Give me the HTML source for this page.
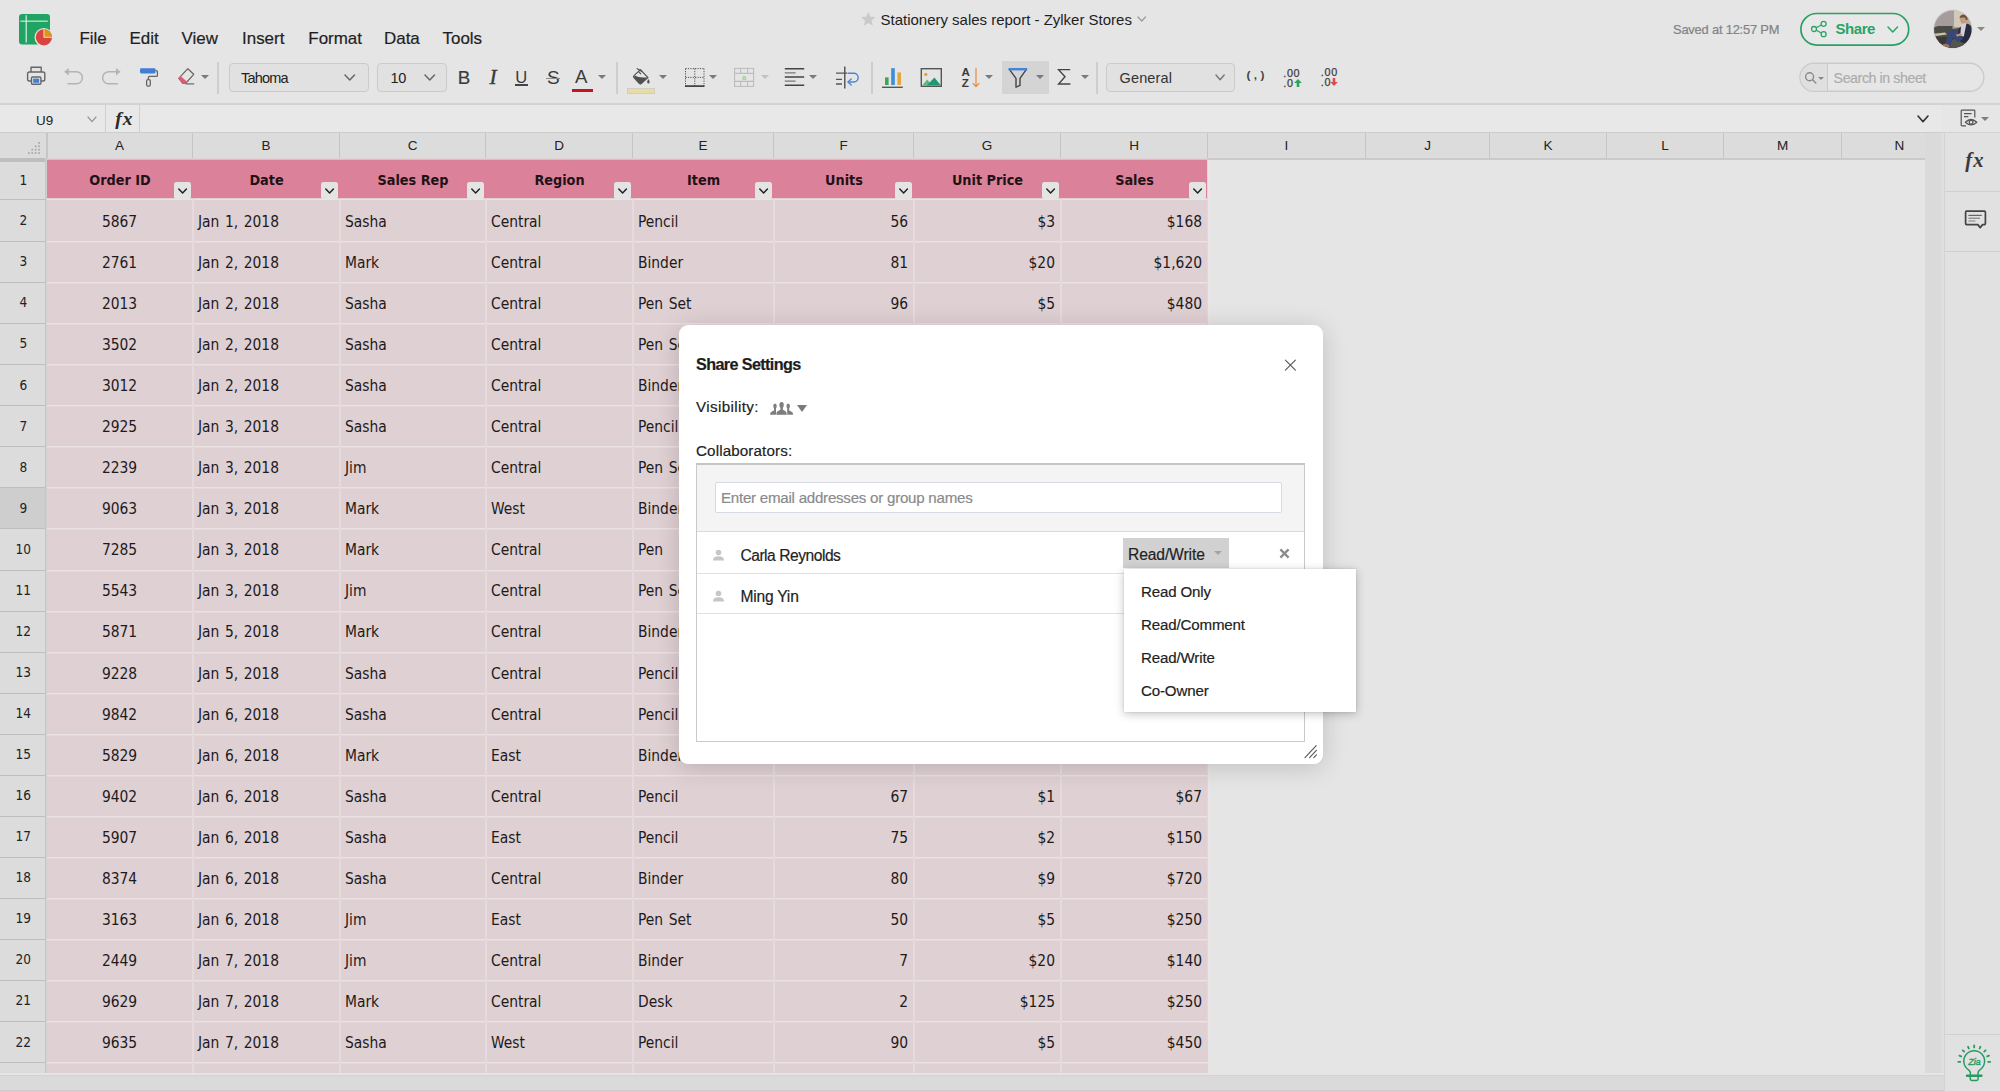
<!DOCTYPE html>
<html lang="en"><head><meta charset="utf-8"><title>Stationery sales report - Zylker Stores</title>
<style>

html,body{margin:0;padding:0}
body{width:2000px;height:1091px;position:relative;overflow:hidden;background:#e5e5e5;font-family:"Liberation Sans", sans-serif;color:#222;}
.abs{position:absolute}
.abs svg{display:block}
#top{position:absolute;left:0;top:0;width:2000px;height:103px;background:#e5e5e5;border-bottom:2px solid #d3d3d3}
.menu{position:absolute;top:28px;font-size:16.95px;line-height:22px;color:#1f1f1f;white-space:nowrap;-webkit-text-stroke:0.2px #1f1f1f}
.tsep{position:absolute;top:61.6px;width:1.8px;height:32.2px;background:#cdcdcd}
.dd{position:absolute;top:62.8px;height:27.4px;border:1.3px solid #cbcbcb;border-radius:4px;background:#e1e1e1;font-size:14.5px;line-height:28px;color:#222;white-space:nowrap}
.caret{position:absolute;width:0;height:0;border-left:4px solid transparent;border-right:4px solid transparent;border-top:4.5px solid #7a7a7a}
#fbar{position:absolute;left:0;top:105px;width:1942px;height:27px;background:#e8e8e8;border-bottom:1px solid #cdcdcd}
#colhdr{position:absolute;left:0;top:133px;width:1925px;height:25px;background:#dcdcdc;border-bottom:2px solid #cacaca}
.ch{position:absolute;top:0;height:25px;line-height:25px;text-align:center;font-size:13.5px;color:#222;border-right:1px solid #c5c5c5;box-sizing:border-box}
#rowhdr{position:absolute;left:0;top:160px;width:45px;height:913px;background:#dcdcdc;border-right:1px solid #c8c6c5;overflow:hidden}
.rh{position:absolute;left:0;width:45px;text-align:center;font-size:13.5px;color:#222;font-family:"DejaVu Sans Condensed", "DejaVu Sans", "Liberation Sans", sans-serif;font-stretch:condensed;border-bottom:1px solid #bebec0;box-sizing:border-box;text-indent:1.6px}
#sheet{position:absolute;left:47px;top:160px;width:1878px;height:913px;background:#e5e5e5;overflow:hidden}
#pink{position:absolute;left:0;top:0;width:1161px;height:913px;background:#dfd0d3}
.hl{position:absolute;left:0;width:1161px;height:2px;background:linear-gradient(#eae2e3 50%,#e4d8db 50%)}
.vl{position:absolute;top:39px;width:2px;height:880px;background:#e5dbdc}
.c{position:absolute;font-stretch:condensed;font-family:"DejaVu Sans Condensed", "DejaVu Sans", "Liberation Sans", sans-serif;font-size:15.4px;color:#1d1a1c;white-space:nowrap;line-height:20px;word-spacing:1.2px}
.hc{position:absolute;font-stretch:condensed;font-family:"DejaVu Sans Condensed", "DejaVu Sans", "Liberation Sans", sans-serif;font-weight:bold;font-size:14.3px;color:#1f1217;white-space:nowrap;line-height:20px;text-align:center}
.fb{position:absolute;width:17px;height:17px;background:#e4e4e4;border-radius:2.5px;top:22px}
#vscroll{position:absolute;left:1925px;top:133px;width:16px;height:940px;background:#dadada;border-right:3px solid #dfdfdf}
#hscroll{position:absolute;left:0;top:1073px;width:1944px;height:18px;background:linear-gradient(#e5e5e5 0,#e5e5e5 2px,#d2d2d2 2px,#d2d2d2 3px,#dadada 3px,#dadada 16.5px,#cbcbcb 16.5px);box-sizing:border-box}
#rpanel{position:absolute;left:1944px;top:133px;width:56px;height:958px;background:#e1e1e1;border-left:1px solid #d3d3d3;box-sizing:border-box}
.rsep{position:absolute;left:0;width:56px;height:1.4px;background:#d0d0d0}
#dlg{position:absolute;left:679px;top:325px;width:644px;height:439px;background:#fff;border-radius:9px;box-shadow:0 3px 24px rgba(0,0,0,0.17)}
#dlg .t{position:absolute;white-space:nowrap;color:#222;-webkit-text-stroke:0.18px currentColor}
#menu2{position:absolute;left:1124px;top:569px;width:232px;height:143px;background:#fff;box-shadow:0 2px 9px rgba(0,0,0,0.24), 0 0 2px rgba(0,0,0,0.12)}
#menu2 div{position:absolute;left:17px;-webkit-text-stroke:0.18px #222;letter-spacing:-0.15px;font-size:15.1px;line-height:20px;color:#222;white-space:nowrap}

</style></head>
<body>
<div id="top">
<svg class="abs" style="left:18px;top:13px" width="36" height="36" viewBox="18 13 36 36">
<rect x="19" y="14" width="31" height="30.5" rx="3.2" fill="#1fa463"/>
<rect x="20.3" y="20.6" width="27.5" height="1.1" fill="#d9f0e3"/>
<rect x="25.6" y="15.2" width="1.2" height="27.3" fill="#d9f0e3"/>
<circle cx="43.9" cy="37.3" r="9.4" fill="#e5e5e5"/>
<circle cx="43.9" cy="37.3" r="8.1" fill="#d8453f"/>
<path d="M43.9 37.3 L43.9 29.2 A8.1 8.1 0 0 1 52 37.3 Z" fill="#dd9617"/>
<path d="M43.9 29.2 L43.9 37.3 L52 37.3" fill="none" stroke="#e5e5e5" stroke-width="0.9"/>
</svg>
<div class="menu" style="left:79.5px">File</div>
<div class="menu" style="left:129.5px">Edit</div>
<div class="menu" style="left:181.5px">View</div>
<div class="menu" style="left:242px">Insert</div>
<div class="menu" style="left:308.3px">Format</div>
<div class="menu" style="left:384px">Data</div>
<div class="menu" style="left:442.5px">Tools</div>
<svg class="abs" style="left:860px;top:11px" width="17" height="16" viewBox="0 0 17 16"><path d="M8.3 0.8 L10.3 5.7 L15.6 6.1 L11.5 9.5 L12.8 14.7 L8.3 11.9 L3.8 14.7 L5.1 9.5 L1 6.1 L6.3 5.7 Z" fill="#c9c9c9"/></svg>
<div class="abs" id="title" style="left:880.5px;top:10.3px;font-size:15px;line-height:20px;color:#1e1e1e;white-space:nowrap;letter-spacing:-0.01px">Stationery sales report - Zylker Stores</div>
<svg class="abs" style="left:1136px;top:14.5px" width="11.5" height="8" viewBox="-2 -2 11.5 8"><path d="M0 0 L3.75 4 L7.5 0" fill="none" stroke="#999" stroke-width="1.2" stroke-linecap="round" stroke-linejoin="round"/></svg>
<div class="abs" id="saved" style="left:1673px;top:21px;font-size:12.9px;line-height:18px;color:#838383;white-space:nowrap;letter-spacing:-0.2px;-webkit-text-stroke:0.2px #838383">Saved at 12:57 PM</div>
<svg class="abs" style="left:1798px;top:11px" width="114" height="37" viewBox="0 0 114 37"><rect x="2.9" y="2.5" width="107.8" height="31.6" rx="15.8" fill="#e8e8e8" stroke="#2aa164" stroke-width="1.7"/></svg>
<svg class="abs" style="left:1809px;top:19px" width="20" height="20" viewBox="0 0 20 20" fill="none" stroke="#27a567" stroke-width="1.3">
<circle cx="5" cy="10" r="2.5"/><circle cx="14.6" cy="4.8" r="2.5"/><circle cx="14.6" cy="15.2" r="2.5"/><path d="M7.2 8.8 L12.4 6 M7.2 11.2 L12.4 14"/></svg>
<div class="abs" id="sharetxt" style="left:1835.5px;top:19px;font-size:15px;font-weight:bold;line-height:20px;color:#27a567;letter-spacing:-0.45px">Share</div>
<svg class="abs" style="left:1885.5px;top:24.5px" width="13.5" height="9" viewBox="-2 -2 13.5 9"><path d="M0 0 L4.75 5 L9.5 0" fill="none" stroke="#27a567" stroke-width="1.5" stroke-linecap="round" stroke-linejoin="round"/></svg>
<svg class="abs" style="left:1933px;top:9px" width="40" height="41" viewBox="0 0 40 41">
<defs><clipPath id="avc"><circle cx="19.8" cy="20.2" r="18.7"/></clipPath></defs>
<circle cx="19.8" cy="20.2" r="19.6" fill="#d6d2d2"/>
<g clip-path="url(#avc)">
<rect x="0" y="0" width="40" height="41" fill="#a59d9c"/>
<path d="M21 0 H31 V18 H21Z" fill="#d3c9b9"/>
<path d="M30 0 H40 V20 H30Z" fill="#b9ab98"/>
<path d="M0 19 L5 17 H19.5 V20 L26 19 L40 22 V41 H0Z" fill="#4b4b46"/>
<path d="M0 25 L12 23.4 L14 25.4 L0 27.4Z" fill="#c9c0a6"/>
<path d="M0 28 H40 V41 H0Z" fill="#3b3935"/>
<path d="M11 41 Q14 30 26 29 L40 30 V41Z" fill="#55544d"/>
<path d="M26.6 9 Q27 5.6 31 6 Q34.4 6.6 34 10.4 L33.4 14.6 L29 15 L27.4 12.6Z" fill="#c39c84"/>
<path d="M26.4 8.6 Q28 4.8 32 5.6 Q35.4 6.6 34.4 11 L33 11 Q32.6 8 30 8.4 Q28 9 26.4 8.6Z" fill="#6f5038"/>
<path d="M27.6 15 L33.6 14 L35 17 L31.6 28 L26 26Z" fill="#d5cfdb"/>
<path d="M33.4 14.4 Q37.6 15 38.8 19 L39.6 32 L30 34 L24.6 31 L30.8 27.6Z" fill="#262b3d"/>
<path d="M25.6 19.6 L28 17.6 L27.4 24.6 L25 25Z" fill="#2a2e3e"/>
<path d="M15.6 23 Q18 19.8 21.6 21.4 L30 30 L25 33 L19.6 28.6 L17.4 37 L12 36Z" fill="#37477a"/>
<path d="M22.6 25.4 L28 24.4 L29.6 26.4 L24 27.6Z" fill="#b68f7c"/>
<path d="M9.6 35.6 Q12 33.8 15.6 35.6 L16.6 38.4 L10.6 38.6Z" fill="#a3745e"/>
</g></svg>
<div class="caret" style="left:1976.5px;top:27px;border-top-color:#8a8a8a"></div>
<svg class="abs" style="left:26px;top:65px" width="21" height="21" viewBox="26 65 21 21" fill="none" stroke="#666" stroke-width="1.4" stroke-linejoin="round">
<path d="M31 72 V67.2 H41.2 V72"/>
<rect x="27.6" y="72" width="17.2" height="9" rx="1.8"/>
<rect x="31.5" y="77" width="9.4" height="7.3" rx="1" fill="#e5e5e5"/>
<rect x="33.2" y="78.6" width="6" height="4.2" fill="#3f7fd6" stroke="none"/>
</svg>
<svg class="abs" style="left:63px;top:66px" width="21" height="20" viewBox="63 66 21 20" fill="none" stroke="#b4b4b4" stroke-width="1.5" stroke-linecap="round" stroke-linejoin="round">
<path d="M68 71.7 H76.4 A6 6 0 0 1 76.4 83.7 H68"/><path d="M64.2 71.7 L68.8 68 V75.4 Z" fill="#b4b4b4" stroke="none"/></svg>
<svg class="abs" style="left:101px;top:66px" width="21" height="20" viewBox="101 66 21 20" fill="none" stroke="#b4b4b4" stroke-width="1.5" stroke-linecap="round" stroke-linejoin="round">
<path d="M116.6 71.7 H108.6 A6 6 0 0 0 108.6 83.7 H117.4"/><path d="M120.6 71.7 L116 68 V75.4 Z" fill="#b4b4b4" stroke="none"/></svg>
<svg class="abs" style="left:138px;top:66px" width="22" height="22" viewBox="138 66 22 22" fill="none" stroke="#666" stroke-width="1.3" stroke-linejoin="round">
<rect x="140" y="68.2" width="15.6" height="5.2" rx="1.3" fill="#3f7fd6" stroke="none"/>
<path d="M155.6 70.6 H156.4 Q157.4 70.6 157.4 71.6 V75.4 Q157.4 76.4 156.4 76.4 H149.4 Q148.4 76.4 148.4 77.4 V79.6"/>
<rect x="146.6" y="79.6" width="3.7" height="6.6" rx="1.4"/>
</svg>
<svg class="abs" style="left:176px;top:66px" width="20" height="21" viewBox="176 66 20 21" fill="none" stroke="#666" stroke-width="1.3" stroke-linejoin="round">
<path d="M178.8 78.4 L187.8 68.7 L193.7 74.3 L185.6 83.5 H183 Z" stroke-width="1.2"/>
<path d="M178.8 78.4 L180.6 76.4 L186.9 82.1 L185.6 83.5 H183 Z" fill="#dd5b6f" stroke="#dd5b6f" stroke-width="0.8"/>
<path d="M185.6 83.9 H194.2" stroke-width="1.2"/>
</svg>
<div class="caret" style="left:200.6px;top:75.2px;border-top-color:#7a7a7a"></div>
<div class="tsep" style="left:217.4px"></div>
<div class="dd" style="left:229px;width:138px"><span class="abs" id="tahoma" style="left:11px;top:0;letter-spacing:-0.78px">Tahoma</span></div>
<svg class="abs" style="left:343px;top:73.3px" width="13.5" height="9" viewBox="-2 -2 13.5 9"><path d="M0 0 L4.75 5 L9.5 0" fill="none" stroke="#666" stroke-width="1.5" stroke-linecap="round" stroke-linejoin="round"/></svg>
<div class="dd" style="left:377px;width:68px"><span class="abs" style="left:12.5px;top:0;letter-spacing:-0.3px">10</span></div>
<svg class="abs" style="left:422.5px;top:73.3px" width="13.5" height="9" viewBox="-2 -2 13.5 9"><path d="M0 0 L4.75 5 L9.5 0" fill="none" stroke="#666" stroke-width="1.5" stroke-linecap="round" stroke-linejoin="round"/></svg>
<div class="abs" id="tbB" style="left:457.8px;top:67px;font-size:18.8px;line-height:22px;color:#3a3a3a;-webkit-text-stroke:0.15px #3a3a3a">B</div>
<div class="abs" id="tbI" style="left:489.4px;top:66.4px;font-family:'Liberation Serif',serif;font-style:italic;font-size:21.4px;line-height:22px;color:#3a3a3a;-webkit-text-stroke:0.35px #3a3a3a">I</div>
<div class="abs" id="tbU" style="left:515.2px;top:68px;font-size:16.6px;line-height:20px;color:#3a3a3a">U</div>
<div class="abs" style="left:515.2px;top:84px;width:12.6px;height:2px;background:#444"></div>
<div class="abs" id="tbS" style="left:547px;top:67px;font-size:19px;line-height:22px;color:#3a3a3a">S</div>
<div class="abs" style="left:545.8px;top:78px;width:14.2px;height:1px;background:#8a8a8a"></div>
<div class="abs" id="tbA" style="left:575px;top:65.6px;font-size:18.6px;line-height:22px;color:#3a3a3a">A</div>
<div class="abs" style="left:572px;top:89px;width:21px;height:3.2px;background:#c3161c"></div>
<div class="caret" style="left:598px;top:75.2px;border-top-color:#7a7a7a"></div>
<div class="tsep" style="left:616px"></div>
<svg class="abs" style="left:631px;top:66px" width="22" height="20" viewBox="631 66 22 20">
<path d="M640.4 69.6 L648 77.6 L641.2 83.6 Q640.2 84.4 639.2 83.4 L633.8 77.4 Q633 76.4 634 75.6 Z" fill="none" stroke="#505050" stroke-width="1.2" stroke-linejoin="round"/>
<path d="M634.6 75.6 Q640 78.4 647.6 77.2 L641.2 83.4 Q640.2 84.2 639.2 83.2 L634 77.4 Z" fill="#505050"/>
<path d="M638.4 71.4 L641 74.2" fill="none" stroke="#505050" stroke-width="1.2"/>
<path d="M637.2 68.8 L641.6 71.2" fill="none" stroke="#505050" stroke-width="1.3" stroke-linecap="round"/>
<path d="M648.4 79 Q650.3 81.6 649.6 82.8 Q648.4 84.2 647.2 82.8 Q646.6 81.6 648.4 79Z" fill="#505050"/>
</svg>
<div class="abs" style="left:627px;top:88px;width:26px;height:4px;background:#e8dca2;border:1px solid #cfcdc4"></div>
<div class="caret" style="left:659.2px;top:75.2px;border-top-color:#7a7a7a"></div>
<svg class="abs" style="left:684px;top:67px" width="22" height="21" viewBox="684 67 22 21" fill="none" stroke="#555" stroke-width="1">
<path d="M685.5 68.6 H704 M685.5 68.6 V86 M704 68.6 V86 M694.8 68.6 V86 M685.5 77.4 H704" stroke-dasharray="1.2 1.2"/>
<path d="M685 86.1 H704.5" stroke="#333" stroke-width="1.6"/>
</svg>
<div class="caret" style="left:709.4px;top:75.2px;border-top-color:#7a7a7a"></div>
<svg class="abs" style="left:733px;top:67px" width="22" height="21" viewBox="733 67 22 21" fill="none" stroke="#bdbdbd" stroke-width="1.1">
<rect x="734.6" y="68.4" width="19" height="18"/>
<path d="M734.6 73.4 H753.6 M734.6 81.4 H753.6 M740.6 68.4 V73.4 M747.6 68.4 V73.4 M740.6 81.4 V86.4 M747.6 81.4 V86.4"/>
<text x="744.1" y="79.9" font-family="Liberation Sans, sans-serif" font-size="7.6" font-weight="bold" fill="#8fd0aa" stroke="none" text-anchor="middle">a</text>
</svg>
<div class="caret" style="left:760.8px;top:75.2px;border-top-color:#c2c2c2"></div>
<svg class="abs" style="left:784px;top:67px" width="22" height="20" viewBox="784 67 22 20" fill="none" stroke-linecap="butt">
<path d="M784.8 68.8 H804.2 M784.8 77 H804.2 M784.8 85.2 H804.2" stroke="#444" stroke-width="1.5"/>
<path d="M784.8 72.9 H795.6 M784.8 81.1 H795.6" stroke="#777" stroke-width="1.4"/>
</svg>
<div class="caret" style="left:809.4px;top:75.2px;border-top-color:#7a7a7a"></div>
<svg class="abs" style="left:835px;top:65px" width="26" height="25" viewBox="835 65 26 25" fill="none">
<path d="M844.8 66.6 V88.4" stroke="#444" stroke-width="1.3"/>
<path d="M836 73.2 H847.4 M836 79.3 H842 M836 84 H842" stroke="#555" stroke-width="1.3"/>
<path d="M848 73.2 H853.8 A4.4 4.4 0 0 1 853.8 82 H848.4" stroke="#4a86d4" stroke-width="1.4"/>
<path d="M851.2 78.9 L847.9 82 L851.2 85.1" stroke="#4a86d4" stroke-width="1.4" stroke-linejoin="round" stroke-linecap="round"/>
</svg>
<div class="tsep" style="left:871px"></div>
<svg class="abs" style="left:881px;top:67px" width="23" height="22" viewBox="881 67 23 22">
<rect x="885" y="77.4" width="3.6" height="7.6" fill="#3aa657"/>
<rect x="891.2" y="68.2" width="3.6" height="16.8" fill="#3e8ddb"/>
<rect x="897.4" y="72.4" width="3.6" height="12.6" fill="#e3a63e"/>
<rect x="882" y="86.6" width="20.8" height="1.4" fill="#555"/>
</svg>
<svg class="abs" style="left:920px;top:67px" width="23" height="21" viewBox="920 67 23 21">
<rect x="921.3" y="68.7" width="20" height="17.6" fill="none" stroke="#555" stroke-width="1.4"/>
<circle cx="925.8" cy="74.4" r="1.7" fill="#e0a832"/>
<path d="M922 85.6 L927.2 79.6 L930.6 83.2 L929 85.6Z" fill="#5fb878"/>
<path d="M926.8 85.6 L934.4 77.4 L941 85.6Z" fill="#1d9a74"/>
</svg>
<div class="abs" style="left:961.4px;top:66.2px;font-size:11.6px;font-weight:bold;line-height:11px;color:#3a3a3a">A</div>
<div class="abs" style="left:961.8px;top:76.6px;font-size:11.6px;font-weight:bold;line-height:11px;color:#3a3a3a">Z</div>
<svg class="abs" style="left:971px;top:67px" width="10" height="21" viewBox="971 67 10 21" fill="none" stroke="#e58a3c" stroke-width="1.2" stroke-linecap="round" stroke-linejoin="round">
<path d="M976 68.4 V86.4 M973 83.4 L976 86.6 L979 83.4"/></svg>
<div class="caret" style="left:984.8px;top:75.2px;border-top-color:#7a7a7a"></div>
<div class="abs" style="left:1002px;top:61.3px;width:47px;height:32.3px;background:#d4d4d4"></div>
<svg class="abs" style="left:1007px;top:67px" width="22" height="22" viewBox="1007 67 22 22">
<path d="M1009.4 69.4 H1026.4 L1020 78.4 V85.4 L1016 87.2 V78.4 Z" fill="none" stroke="#444" stroke-width="1.4" stroke-linejoin="round"/>
<rect x="1008.6" y="68" width="18.6" height="2.4" fill="#4285d6"/>
</svg>
<div class="caret" style="left:1036.2px;top:75.2px;border-top-color:#7a7a7a"></div>
<svg class="abs" style="left:1056px;top:67px" width="17" height="19" viewBox="1056 67 17 19" fill="none" stroke="#444" stroke-width="1.4" stroke-linejoin="miter">
<path d="M1070.2 69.6 H1058.6 L1065 76.8 L1058.6 84 H1070.4"/></svg>
<div class="caret" style="left:1081px;top:75.2px;border-top-color:#7a7a7a"></div>
<div class="tsep" style="left:1096px"></div>
<div class="dd" style="left:1106px;width:127px"><span class="abs" id="general" style="left:12.5px;top:0;letter-spacing:0.15px;color:#333">General</span></div>
<svg class="abs" style="left:1213.6px;top:73.4px" width="12.2" height="8.8" viewBox="-2 -2 12.2 8.8"><path d="M0 0 L4.1 4.8 L8.2 0" fill="none" stroke="#777" stroke-width="1.4" stroke-linecap="round" stroke-linejoin="round"/></svg>
<div class="abs" id="paren" style="left:1246.4px;top:65.4px;font-size:11.8px;font-weight:bold;line-height:20px;color:#444;letter-spacing:3.5px">(,)</div>
<div class="abs" style="left:1283.2px;top:68px;font-size:10.8px;line-height:10px;color:#3c3c3c;letter-spacing:0.7px;-webkit-text-stroke:0.25px #3c3c3c">.00</div><div class="abs" style="left:1283.2px;top:78.2px;font-size:10.8px;line-height:10px;color:#3c3c3c;letter-spacing:0.7px;-webkit-text-stroke:0.25px #3c3c3c">.0</div><svg class="abs" style="left:1293.8px;top:78.9px" width="8" height="8" viewBox="0 0 8 8"><path d="M4 0 L7.9 4 H5.3 V8 H2.7 V4 H0.1Z" fill="#2aa55a"/></svg>
<div class="abs" style="left:1320.8px;top:67px;font-size:10.8px;line-height:10px;color:#3c3c3c;letter-spacing:0.7px;-webkit-text-stroke:0.25px #3c3c3c">.00</div><div class="abs" style="left:1320.8px;top:77.2px;font-size:10.8px;line-height:10px;color:#3c3c3c;letter-spacing:0.7px;-webkit-text-stroke:0.25px #3c3c3c">.0</div><svg class="abs" style="left:1329.9px;top:77.9px" width="8" height="8" viewBox="0 0 8 8"><path d="M4 8 L7.9 4 H5.3 V0 H2.7 V4 H0.1Z" fill="#dd4d4d"/></svg>
<svg class="abs" style="left:1797px;top:60px" width="190" height="34" viewBox="0 0 190 34"><rect x="2.9" y="3.3" width="184" height="28" rx="14" fill="#e6e6e6" stroke="#cbcbcb" stroke-width="1.4"/><path d="M30.4 4 H17 A13.3 13.3 0 0 0 17 30.6 H30.4Z" fill="#dfdfdf"/></svg>
<div class="abs" style="left:1827px;top:64px;width:1.3px;height:27px;background:#cbcbcb"></div>
<svg class="abs" style="left:1804px;top:71px" width="14" height="14" viewBox="0 0 14 14" fill="none" stroke="#8a8a8a" stroke-width="1.4" stroke-linecap="round"><circle cx="5.6" cy="5.8" r="4"/><path d="M8.6 8.8 L11.8 12"/></svg>
<div class="caret" style="left:1817.6px;top:77.2px;border-left-width:3px;border-right-width:3px;border-top-width:3.4px;border-top-color:#888"></div>
<div class="abs" id="search" style="left:1833.6px;top:68.6px;font-size:14.2px;line-height:18px;color:#adadad;white-space:nowrap;letter-spacing:-0.42px;-webkit-text-stroke:0.2px #adadad">Search in sheet</div>
</div>
<div id="fbar">
<div class="abs" style="left:36px;top:6.5px;font-size:13.4px;line-height:18px;color:#222">U9</div>
<div class="abs" style="left:105px;top:0;width:1.3px;height:27px;background:#d0d0d0"></div>
<div class="abs" style="left:139px;top:0;width:1.3px;height:27px;background:#d0d0d0"></div>
<div class="abs" id="fx1" style="left:115.2px;top:2.6px;font-family:'Liberation Serif',serif;font-style:italic;font-weight:bold;font-size:19.6px;line-height:22px;color:#2a2a2a;letter-spacing:1px">fx</div>
</div>
<svg class="abs" style="left:86.4px;top:115px" width="12" height="8.6" viewBox="-2 -2 12 8.6"><path d="M0 0 L4 4.6 L8 0" fill="none" stroke="#999" stroke-width="1.3" stroke-linecap="round" stroke-linejoin="round"/></svg>
<svg class="abs" style="left:1915.6px;top:114.2px" width="14" height="9.6" viewBox="-2 -2 14 9.6"><path d="M0 0 L5 5.6 L10 0" fill="none" stroke="#333" stroke-width="1.6" stroke-linecap="round" stroke-linejoin="round"/></svg>
<div class="abs" style="left:1942px;top:105px;width:58px;height:27px;background:#e6e6e6;border-bottom:1px solid #d2d2d2"></div>
<div id="rpanel">
<div class="rsep" style="top:58px"></div><div class="rsep" style="top:118px"></div><div class="rsep" style="top:901px"></div>
</div>
<svg class="abs" style="left:1959px;top:108px" width="20" height="20" viewBox="1959 108 20 20" fill="none" stroke="#555" stroke-width="1.2" stroke-linejoin="round">
<path d="M1966 125.8 H1962 Q1961.2 125.8 1961.2 125 V111 Q1961.2 110.2 1962 110.2 H1974 Q1974.8 110.2 1974.8 111 V117.4"/>
<path d="M1964 113.6 H1971.6 M1964 116.6 H1968.4" stroke-width="1.1"/>
<path d="M1965.4 122.2 Q1971 116.8 1976.8 122.2 Q1971 127.6 1965.4 122.2 Z" fill="#e3e3e3"/>
<circle cx="1971.1" cy="122.2" r="1.9"/>
</svg>
<div class="caret" style="left:1981px;top:117.2px;border-top-color:#7d7d7d"></div>
<div class="abs" id="fx2" style="left:1965.2px;top:145.6px;font-family:'Liberation Serif',serif;font-style:italic;font-weight:bold;font-size:20.6px;line-height:28px;color:#3a3a3a;letter-spacing:1.1px">fx</div>
<svg class="abs" style="left:1963px;top:209px" width="25" height="22" viewBox="1963 209 25 22" fill="none" stroke="#444" stroke-width="1.4" stroke-linejoin="round">
<path d="M1966.6 211.2 H1984.4 Q1985.4 211.2 1985.4 212.2 V223.6 Q1985.4 224.6 1984.4 224.6 H1982.6 L1980.2 227.6 L1977.8 224.6 H1966.6 Q1965.6 224.6 1965.6 223.6 V212.2 Q1965.6 211.2 1966.6 211.2 Z" stroke-width="1.7"/>
<path d="M1968.4 215.4 H1981.8" stroke="#666" stroke-width="1.2"/><path d="M1968.4 218.2 H1980" stroke="#777" stroke-width="1.1"/><path d="M1968.4 221 H1975.4" stroke="#888" stroke-width="1.1"/>
</svg>
<svg class="abs" style="left:1956px;top:1043px" width="37" height="40" viewBox="0 0 37 40" fill="none" stroke="#279b62" stroke-width="1.5" stroke-linecap="round">
<path d="M14.4 32 V30 Q14.4 28 12.5 26.8 A10.4 10.4 0 1 1 23.9 26.8 Q22 28 22 30 V32" stroke-linejoin="round"/>
<path d="M11 32.8 H25.4" stroke-width="2.4"/><path d="M14.3 34.2 V36 Q14.3 37.4 15.8 37.4 H20.6 Q22.1 37.4 22.1 36 V34.2"/>
<path d="M18.2 4.4 L18.2 2.4 M23.6 5.5 L24.4 3.7 M12.8 5.5 L12.0 3.7 M28.2 8.6 L29.6 7.3 M8.2 8.6 L6.8 7.3 M31.2 13.3 L33.0 12.6 M5.2 13.3 L3.4 12.6 M32.1 18.8 L34.1 18.9 M4.3 18.8 L2.3 18.9" stroke-width="1.8"/>
<text x="18.4" y="21.9" font-family="Liberation Sans, sans-serif" font-style="italic" font-size="9.4" fill="#279b62" stroke="#279b62" stroke-width="0.35" text-anchor="middle" letter-spacing="-0.3">Zia</text>
</svg>
<div id="colhdr">
<div class="ch" style="left:0;width:47.6px;border-right:2px solid #c6c6c6;z-index:2"></div>
<svg class="abs" style="left:27.8px;top:8.6px" width="14" height="14" viewBox="0 0 14 14" fill="#a6a6a6"><rect x="10.2" y="0" width="1.7" height="1.7"/><rect x="6.8" y="3.4" width="1.7" height="1.7"/><rect x="10.2" y="3.4" width="1.7" height="1.7"/><rect x="3.4" y="6.8" width="1.7" height="1.7"/><rect x="6.8" y="6.8" width="1.7" height="1.7"/><rect x="10.2" y="6.8" width="1.7" height="1.7"/><rect x="0" y="10.2" width="1.7" height="1.7"/><rect x="3.4" y="10.2" width="1.7" height="1.7"/><rect x="6.8" y="10.2" width="1.7" height="1.7"/><rect x="10.2" y="10.2" width="1.7" height="1.7"/></svg>
<div class="ch" style="left:47px;width:146px">A</div>
<div class="ch" style="left:193px;width:147px">B</div>
<div class="ch" style="left:340px;width:146px">C</div>
<div class="ch" style="left:486px;width:147px">D</div>
<div class="ch" style="left:633px;width:141px">E</div>
<div class="ch" style="left:774px;width:140px">F</div>
<div class="ch" style="left:914px;width:147px">G</div>
<div class="ch" style="left:1061px;width:147px">H</div>
<div class="ch" style="left:1208px;width:158px">I</div>
<div class="ch" style="left:1366px;width:124px">J</div>
<div class="ch" style="left:1490px;width:117px">K</div>
<div class="ch" style="left:1607px;width:117px">L</div>
<div class="ch" style="left:1724px;width:118px">M</div>
<div class="ch" style="left:1842px;width:83px;border-right:none;background:#dcdcdc;text-align:left"><span class="abs" style="left:52.6px">N</span></div>
</div>
<div id="rowhdr">
<div class="rh" style="top:0px;height:40px;line-height:41.2px;">1</div>
<div class="rh" style="top:40px;height:42px;line-height:41.6px;">2</div>
<div class="rh" style="top:82px;height:41px;line-height:39.72px;">3</div>
<div class="rh" style="top:123px;height:41px;line-height:39.84px;">4</div>
<div class="rh" style="top:164px;height:41px;line-height:39.96px;">5</div>
<div class="rh" style="top:205px;height:41px;line-height:40.08px;">6</div>
<div class="rh" style="top:246px;height:41px;line-height:40.2px;">7</div>
<div class="rh" style="top:287px;height:41px;line-height:40.32px;">8</div>
<div class="rh" style="top:328px;height:41px;line-height:40.44px;background:#cecece;">9</div>
<div class="rh" style="top:369px;height:42px;line-height:40.56px;">10</div>
<div class="rh" style="top:411px;height:41px;line-height:38.68px;">11</div>
<div class="rh" style="top:452px;height:41px;line-height:38.8px;">12</div>
<div class="rh" style="top:493px;height:41px;line-height:38.92px;">13</div>
<div class="rh" style="top:534px;height:41px;line-height:39.04px;">14</div>
<div class="rh" style="top:575px;height:41px;line-height:39.16px;">15</div>
<div class="rh" style="top:616px;height:41px;line-height:39.28px;">16</div>
<div class="rh" style="top:657px;height:41px;line-height:39.4px;">17</div>
<div class="rh" style="top:698px;height:41px;line-height:39.52px;">18</div>
<div class="rh" style="top:739px;height:41px;line-height:39.64px;">19</div>
<div class="rh" style="top:780px;height:41px;line-height:39.76px;">20</div>
<div class="rh" style="top:821px;height:41px;line-height:39.88px;">21</div>
<div class="rh" style="top:862px;height:41px;line-height:40px;">22</div>
<div class="rh" style="top:903px;height:42px;line-height:40.12px;">23</div>
</div>
<div class="abs" style="left:0;top:158px;width:45px;height:4px;background:#bebebe"></div>
<div class="abs" style="left:47px;top:158px;width:1161px;height:2px;background:linear-gradient(#e2dcdd,#ddb3bf)"></div>
<div class="abs" style="left:46px;top:160px;width:1px;height:913px;background:#d3cecf"></div>
<div id="sheet">
<div id="pink"></div>
<div class="abs" style="left:0;top:0;width:1161px;height:38.4px;background:#db829a"></div>
<div class="hl" style="top:38.6px;background:#f3dfe5;height:1.5px"></div>
<div class="hl" style="top:81px"></div>
<div class="hl" style="top:122px"></div>
<div class="hl" style="top:163px"></div>
<div class="hl" style="top:204px"></div>
<div class="hl" style="top:245px"></div>
<div class="hl" style="top:286px"></div>
<div class="hl" style="top:327px"></div>
<div class="hl" style="top:368px"></div>
<div class="hl" style="top:410px"></div>
<div class="hl" style="top:451px"></div>
<div class="hl" style="top:492px"></div>
<div class="hl" style="top:533px"></div>
<div class="hl" style="top:574px"></div>
<div class="hl" style="top:615px"></div>
<div class="hl" style="top:656px"></div>
<div class="hl" style="top:697px"></div>
<div class="hl" style="top:738px"></div>
<div class="hl" style="top:779px"></div>
<div class="hl" style="top:820px"></div>
<div class="hl" style="top:861px"></div>
<div class="hl" style="top:902px"></div>
<div class="vl" style="left:145px"></div>
<div class="vl" style="left:292px"></div>
<div class="vl" style="left:438px"></div>
<div class="vl" style="left:585px"></div>
<div class="vl" style="left:726px"></div>
<div class="vl" style="left:866px"></div>
<div class="vl" style="left:1013px"></div>
<div class="vl" style="left:1160px;top:0;width:1px;background:#e3d6d9"></div><div class="vl" style="left:1161px;top:0;width:2px;background:#ece4e6"></div>
<div class="hc" style="left:0px;width:146px;top:10.1px">Order ID</div>
<div class="fb" style="left:127.4px"></div>
<svg class="abs" style="left:130.4px;top:27px" width="12" height="9" viewBox="0 0 12 9"><path d="M1.8 2 L5.6 6 L9.4 2" fill="none" stroke="#222" stroke-width="1.5" stroke-linecap="round" stroke-linejoin="round"/></svg>
<div class="hc" style="left:146px;width:147px;top:10.1px">Date</div>
<div class="fb" style="left:274.4px"></div>
<svg class="abs" style="left:277.4px;top:27px" width="12" height="9" viewBox="0 0 12 9"><path d="M1.8 2 L5.6 6 L9.4 2" fill="none" stroke="#222" stroke-width="1.5" stroke-linecap="round" stroke-linejoin="round"/></svg>
<div class="hc" style="left:293px;width:146px;top:10.1px">Sales Rep</div>
<div class="fb" style="left:420.4px"></div>
<svg class="abs" style="left:423.4px;top:27px" width="12" height="9" viewBox="0 0 12 9"><path d="M1.8 2 L5.6 6 L9.4 2" fill="none" stroke="#222" stroke-width="1.5" stroke-linecap="round" stroke-linejoin="round"/></svg>
<div class="hc" style="left:439px;width:147px;top:10.1px">Region</div>
<div class="fb" style="left:567.4px"></div>
<svg class="abs" style="left:570.4px;top:27px" width="12" height="9" viewBox="0 0 12 9"><path d="M1.8 2 L5.6 6 L9.4 2" fill="none" stroke="#222" stroke-width="1.5" stroke-linecap="round" stroke-linejoin="round"/></svg>
<div class="hc" style="left:586px;width:141px;top:10.1px">Item</div>
<div class="fb" style="left:708.4px"></div>
<svg class="abs" style="left:711.4px;top:27px" width="12" height="9" viewBox="0 0 12 9"><path d="M1.8 2 L5.6 6 L9.4 2" fill="none" stroke="#222" stroke-width="1.5" stroke-linecap="round" stroke-linejoin="round"/></svg>
<div class="hc" style="left:727px;width:140px;top:10.1px">Units</div>
<div class="fb" style="left:848.4px"></div>
<svg class="abs" style="left:851.4px;top:27px" width="12" height="9" viewBox="0 0 12 9"><path d="M1.8 2 L5.6 6 L9.4 2" fill="none" stroke="#222" stroke-width="1.5" stroke-linecap="round" stroke-linejoin="round"/></svg>
<div class="hc" style="left:867px;width:147px;top:10.1px">Unit Price</div>
<div class="fb" style="left:995.4px"></div>
<svg class="abs" style="left:998.4px;top:27px" width="12" height="9" viewBox="0 0 12 9"><path d="M1.8 2 L5.6 6 L9.4 2" fill="none" stroke="#222" stroke-width="1.5" stroke-linecap="round" stroke-linejoin="round"/></svg>
<div class="hc" style="left:1014px;width:147px;top:10.1px">Sales</div>
<div class="fb" style="left:1142.4px"></div>
<svg class="abs" style="left:1145.4px;top:27px" width="12" height="9" viewBox="0 0 12 9"><path d="M1.8 2 L5.6 6 L9.4 2" fill="none" stroke="#222" stroke-width="1.5" stroke-linecap="round" stroke-linejoin="round"/></svg>
<div class="c" style="left:0px;width:145px;top:51.87px;text-align:center">5867</div>
<div class="c" style="left:151px;top:51.87px">Jan 1, 2018</div>
<div class="c" style="left:298px;top:51.87px">Sasha</div>
<div class="c" style="left:444px;top:51.87px">Central</div>
<div class="c" style="left:591px;top:51.87px">Pencil</div>
<div class="c" style="right:1017px;top:51.87px">56</div>
<div class="c" style="right:870px;top:51.87px">$3</div>
<div class="c" style="right:723px;top:51.87px">$168</div>
<div class="c" style="left:0px;width:145px;top:92.93px;text-align:center">2761</div>
<div class="c" style="left:151px;top:92.93px">Jan 2, 2018</div>
<div class="c" style="left:298px;top:92.93px">Mark</div>
<div class="c" style="left:444px;top:92.93px">Central</div>
<div class="c" style="left:591px;top:92.93px">Binder</div>
<div class="c" style="right:1017px;top:92.93px">81</div>
<div class="c" style="right:870px;top:92.93px">$20</div>
<div class="c" style="right:723px;top:92.93px">$1,620</div>
<div class="c" style="left:0px;width:145px;top:133.99px;text-align:center">2013</div>
<div class="c" style="left:151px;top:133.99px">Jan 2, 2018</div>
<div class="c" style="left:298px;top:133.99px">Sasha</div>
<div class="c" style="left:444px;top:133.99px">Central</div>
<div class="c" style="left:591px;top:133.99px">Pen Set</div>
<div class="c" style="right:1017px;top:133.99px">96</div>
<div class="c" style="right:870px;top:133.99px">$5</div>
<div class="c" style="right:723px;top:133.99px">$480</div>
<div class="c" style="left:0px;width:145px;top:175.05px;text-align:center">3502</div>
<div class="c" style="left:151px;top:175.05px">Jan 2, 2018</div>
<div class="c" style="left:298px;top:175.05px">Sasha</div>
<div class="c" style="left:444px;top:175.05px">Central</div>
<div class="c" style="left:591px;top:175.05px">Pen Set</div>
<div class="c" style="right:1017px;top:175.05px">44</div>
<div class="c" style="right:870px;top:175.05px">$5</div>
<div class="c" style="right:723px;top:175.05px">$220</div>
<div class="c" style="left:0px;width:145px;top:216.11px;text-align:center">3012</div>
<div class="c" style="left:151px;top:216.11px">Jan 2, 2018</div>
<div class="c" style="left:298px;top:216.11px">Sasha</div>
<div class="c" style="left:444px;top:216.11px">Central</div>
<div class="c" style="left:591px;top:216.11px">Binder</div>
<div class="c" style="right:1017px;top:216.11px">12</div>
<div class="c" style="right:870px;top:216.11px">$20</div>
<div class="c" style="right:723px;top:216.11px">$240</div>
<div class="c" style="left:0px;width:145px;top:257.17px;text-align:center">2925</div>
<div class="c" style="left:151px;top:257.17px">Jan 3, 2018</div>
<div class="c" style="left:298px;top:257.17px">Sasha</div>
<div class="c" style="left:444px;top:257.17px">Central</div>
<div class="c" style="left:591px;top:257.17px">Pencil</div>
<div class="c" style="right:1017px;top:257.17px">36</div>
<div class="c" style="right:870px;top:257.17px">$3</div>
<div class="c" style="right:723px;top:257.17px">$108</div>
<div class="c" style="left:0px;width:145px;top:298.23px;text-align:center">2239</div>
<div class="c" style="left:151px;top:298.23px">Jan 3, 2018</div>
<div class="c" style="left:298px;top:298.23px">Jim</div>
<div class="c" style="left:444px;top:298.23px">Central</div>
<div class="c" style="left:591px;top:298.23px">Pen Set</div>
<div class="c" style="right:1017px;top:298.23px">27</div>
<div class="c" style="right:870px;top:298.23px">$5</div>
<div class="c" style="right:723px;top:298.23px">$135</div>
<div class="c" style="left:0px;width:145px;top:339.29px;text-align:center">9063</div>
<div class="c" style="left:151px;top:339.29px">Jan 3, 2018</div>
<div class="c" style="left:298px;top:339.29px">Mark</div>
<div class="c" style="left:444px;top:339.29px">West</div>
<div class="c" style="left:591px;top:339.29px">Binder</div>
<div class="c" style="right:1017px;top:339.29px">28</div>
<div class="c" style="right:870px;top:339.29px">$20</div>
<div class="c" style="right:723px;top:339.29px">$560</div>
<div class="c" style="left:0px;width:145px;top:380.35px;text-align:center">7285</div>
<div class="c" style="left:151px;top:380.35px">Jan 3, 2018</div>
<div class="c" style="left:298px;top:380.35px">Mark</div>
<div class="c" style="left:444px;top:380.35px">Central</div>
<div class="c" style="left:591px;top:380.35px">Pen</div>
<div class="c" style="right:1017px;top:380.35px">64</div>
<div class="c" style="right:870px;top:380.35px">$9</div>
<div class="c" style="right:723px;top:380.35px">$576</div>
<div class="c" style="left:0px;width:145px;top:421.41px;text-align:center">5543</div>
<div class="c" style="left:151px;top:421.41px">Jan 3, 2018</div>
<div class="c" style="left:298px;top:421.41px">Jim</div>
<div class="c" style="left:444px;top:421.41px">Central</div>
<div class="c" style="left:591px;top:421.41px">Pen Set</div>
<div class="c" style="right:1017px;top:421.41px">15</div>
<div class="c" style="right:870px;top:421.41px">$5</div>
<div class="c" style="right:723px;top:421.41px">$75</div>
<div class="c" style="left:0px;width:145px;top:462.47px;text-align:center">5871</div>
<div class="c" style="left:151px;top:462.47px">Jan 5, 2018</div>
<div class="c" style="left:298px;top:462.47px">Mark</div>
<div class="c" style="left:444px;top:462.47px">Central</div>
<div class="c" style="left:591px;top:462.47px">Binder</div>
<div class="c" style="right:1017px;top:462.47px">57</div>
<div class="c" style="right:870px;top:462.47px">$20</div>
<div class="c" style="right:723px;top:462.47px">$1,140</div>
<div class="c" style="left:0px;width:145px;top:503.53px;text-align:center">9228</div>
<div class="c" style="left:151px;top:503.53px">Jan 5, 2018</div>
<div class="c" style="left:298px;top:503.53px">Sasha</div>
<div class="c" style="left:444px;top:503.53px">Central</div>
<div class="c" style="left:591px;top:503.53px">Pencil</div>
<div class="c" style="right:1017px;top:503.53px">32</div>
<div class="c" style="right:870px;top:503.53px">$2</div>
<div class="c" style="right:723px;top:503.53px">$64</div>
<div class="c" style="left:0px;width:145px;top:544.59px;text-align:center">9842</div>
<div class="c" style="left:151px;top:544.59px">Jan 6, 2018</div>
<div class="c" style="left:298px;top:544.59px">Sasha</div>
<div class="c" style="left:444px;top:544.59px">Central</div>
<div class="c" style="left:591px;top:544.59px">Pencil</div>
<div class="c" style="right:1017px;top:544.59px">74</div>
<div class="c" style="right:870px;top:544.59px">$3</div>
<div class="c" style="right:723px;top:544.59px">$222</div>
<div class="c" style="left:0px;width:145px;top:585.65px;text-align:center">5829</div>
<div class="c" style="left:151px;top:585.65px">Jan 6, 2018</div>
<div class="c" style="left:298px;top:585.65px">Mark</div>
<div class="c" style="left:444px;top:585.65px">East</div>
<div class="c" style="left:591px;top:585.65px">Binder</div>
<div class="c" style="right:1017px;top:585.65px">46</div>
<div class="c" style="right:870px;top:585.65px">$9</div>
<div class="c" style="right:723px;top:585.65px">$414</div>
<div class="c" style="left:0px;width:145px;top:626.71px;text-align:center">9402</div>
<div class="c" style="left:151px;top:626.71px">Jan 6, 2018</div>
<div class="c" style="left:298px;top:626.71px">Sasha</div>
<div class="c" style="left:444px;top:626.71px">Central</div>
<div class="c" style="left:591px;top:626.71px">Pencil</div>
<div class="c" style="right:1017px;top:626.71px">67</div>
<div class="c" style="right:870px;top:626.71px">$1</div>
<div class="c" style="right:723px;top:626.71px">$67</div>
<div class="c" style="left:0px;width:145px;top:667.77px;text-align:center">5907</div>
<div class="c" style="left:151px;top:667.77px">Jan 6, 2018</div>
<div class="c" style="left:298px;top:667.77px">Sasha</div>
<div class="c" style="left:444px;top:667.77px">East</div>
<div class="c" style="left:591px;top:667.77px">Pencil</div>
<div class="c" style="right:1017px;top:667.77px">75</div>
<div class="c" style="right:870px;top:667.77px">$2</div>
<div class="c" style="right:723px;top:667.77px">$150</div>
<div class="c" style="left:0px;width:145px;top:708.83px;text-align:center">8374</div>
<div class="c" style="left:151px;top:708.83px">Jan 6, 2018</div>
<div class="c" style="left:298px;top:708.83px">Sasha</div>
<div class="c" style="left:444px;top:708.83px">Central</div>
<div class="c" style="left:591px;top:708.83px">Binder</div>
<div class="c" style="right:1017px;top:708.83px">80</div>
<div class="c" style="right:870px;top:708.83px">$9</div>
<div class="c" style="right:723px;top:708.83px">$720</div>
<div class="c" style="left:0px;width:145px;top:749.89px;text-align:center">3163</div>
<div class="c" style="left:151px;top:749.89px">Jan 6, 2018</div>
<div class="c" style="left:298px;top:749.89px">Jim</div>
<div class="c" style="left:444px;top:749.89px">East</div>
<div class="c" style="left:591px;top:749.89px">Pen Set</div>
<div class="c" style="right:1017px;top:749.89px">50</div>
<div class="c" style="right:870px;top:749.89px">$5</div>
<div class="c" style="right:723px;top:749.89px">$250</div>
<div class="c" style="left:0px;width:145px;top:790.95px;text-align:center">2449</div>
<div class="c" style="left:151px;top:790.95px">Jan 7, 2018</div>
<div class="c" style="left:298px;top:790.95px">Jim</div>
<div class="c" style="left:444px;top:790.95px">Central</div>
<div class="c" style="left:591px;top:790.95px">Binder</div>
<div class="c" style="right:1017px;top:790.95px">7</div>
<div class="c" style="right:870px;top:790.95px">$20</div>
<div class="c" style="right:723px;top:790.95px">$140</div>
<div class="c" style="left:0px;width:145px;top:832.01px;text-align:center">9629</div>
<div class="c" style="left:151px;top:832.01px">Jan 7, 2018</div>
<div class="c" style="left:298px;top:832.01px">Mark</div>
<div class="c" style="left:444px;top:832.01px">Central</div>
<div class="c" style="left:591px;top:832.01px">Desk</div>
<div class="c" style="right:1017px;top:832.01px">2</div>
<div class="c" style="right:870px;top:832.01px">$125</div>
<div class="c" style="right:723px;top:832.01px">$250</div>
<div class="c" style="left:0px;width:145px;top:873.07px;text-align:center">9635</div>
<div class="c" style="left:151px;top:873.07px">Jan 7, 2018</div>
<div class="c" style="left:298px;top:873.07px">Sasha</div>
<div class="c" style="left:444px;top:873.07px">West</div>
<div class="c" style="left:591px;top:873.07px">Pencil</div>
<div class="c" style="right:1017px;top:873.07px">90</div>
<div class="c" style="right:870px;top:873.07px">$5</div>
<div class="c" style="right:723px;top:873.07px">$450</div>
</div>
<div id="vscroll"></div>
<div id="hscroll"></div>
<div id="dlg">
<div class="t" id="dtitle" style="left:17px;top:29.4px;font-size:16.2px;line-height:20px;font-weight:bold;letter-spacing:-0.62px;color:#1d1d1d">Share Settings</div>
<svg class="abs" style="left:604px;top:33px" width="15" height="15" viewBox="0 0 15 15" fill="none" stroke="#555" stroke-width="1.1" stroke-linecap="round"><path d="M2.4 2.2 L12.4 12.2 M12.4 2.2 L2.4 12.2"/></svg>
<div class="t" id="dvis" style="left:17px;top:72.4px;font-size:15.2px;line-height:20px;letter-spacing:0.36px">Visibility:</div>
<svg class="abs" style="left:90px;top:76px" width="26" height="15" viewBox="0 0 26 15" fill="#7e7e7e">
<ellipse cx="6" cy="4.9" rx="1.75" ry="2.5"/><path d="M1 13.7 Q1 11.2 3.4 10.3 L5 9.5 V7 H7 V13.7Z"/>
<ellipse cx="19.2" cy="4.9" rx="1.75" ry="2.5"/><path d="M24.2 13.7 Q24.2 11.2 21.8 10.3 L20.2 9.5 V7 H18.2 V13.7Z"/>
<g stroke="#fff" stroke-width="1" stroke-linejoin="round"><ellipse cx="12.6" cy="3.9" rx="2.15" ry="2.9"/><path d="M7.3 13.7 Q7.3 10.6 10 9.6 L11.4 8.8 V6 H13.8 V8.8 L15.2 9.6 Q17.9 10.6 17.9 13.7Z"/></g>
<ellipse cx="12.6" cy="3.9" rx="2.15" ry="2.9"/><path d="M7.3 13.7 Q7.3 10.6 10 9.6 L11.4 8.8 V6 H13.8 V8.8 L15.2 9.6 Q17.9 10.6 17.9 13.7Z"/>
</svg>
<div class="caret" style="left:118px;top:80.2px;border-left-width:5.2px;border-right-width:5.2px;border-top-width:7.2px;border-top-color:#7a7a7a"></div>
<div class="t" id="dcol" style="left:17px;top:116.4px;font-size:15.2px;line-height:20px;letter-spacing:0.12px">Collaborators:</div>
<div class="abs" style="left:17px;top:138px;width:607px;height:276px;border:1px solid #c9c9c9;border-top:2px solid #c4c4c4;background:#fff"></div>
<div class="abs" style="left:18px;top:140px;width:607px;height:66px;background:#f4f4f4;border-bottom:1px solid #dadada"></div>
<div class="abs" style="left:36px;top:157.4px;width:565px;height:28.6px;border:1.2px solid #d6dae2;border-radius:2px;background:#fff"></div>
<div class="t" id="dph" style="left:42px;top:163.2px;font-size:15.1px;line-height:20px;color:#8a8a8a;letter-spacing:-0.24px">Enter email addresses or group names</div>
<svg class="abs" style="left:33.4px;top:223.6px" width="13" height="13" viewBox="0 0 13 13" fill="#c6c6c6"><circle cx="6.5" cy="3.5" r="2.8"/><path d="M1 11.4 Q1 7.2 6.5 7.2 Q12 7.2 12 11.4Z"/></svg>
<div class="t" id="dcarla" style="left:61.4px;top:220.8px;font-size:15.6px;line-height:20px;letter-spacing:-0.47px">Carla Reynolds</div>
<div class="abs" style="left:18px;top:248px;width:607px;height:1px;background:#e2e2e2"></div>
<svg class="abs" style="left:33.4px;top:264.6px" width="13" height="13" viewBox="0 0 13 13" fill="#c6c6c6"><circle cx="6.5" cy="3.5" r="2.8"/><path d="M1 11.4 Q1 7.2 6.5 7.2 Q12 7.2 12 11.4Z"/></svg>
<div class="t" id="dming" style="left:61.4px;top:261.8px;font-size:15.6px;line-height:20px;letter-spacing:-0.2px">Ming Yin</div>
<div class="abs" style="left:18px;top:288px;width:607px;height:1px;background:#e2e2e2"></div>
<div class="abs" style="left:444px;top:213px;width:106px;height:29.6px;background:#d1d1d1"></div>
<div class="t" id="drw" style="left:449px;top:220.4px;font-size:15.6px;line-height:20px;letter-spacing:-0.1px">Read/Write</div>
<div class="caret" style="left:535px;top:226.4px;border-top-color:#a5a5a5"></div>
<svg class="abs" style="left:599px;top:222px" width="13" height="13" viewBox="0 0 13 13" fill="none" stroke="#8c8c8c" stroke-width="2.3" stroke-linecap="butt"><path d="M2.4 2.4 L10.6 10.6 M10.6 2.4 L2.4 10.6"/></svg>
<svg class="abs" style="left:623px;top:418px" width="16" height="16" viewBox="0 0 16 16" fill="none" stroke="#555" stroke-width="1.1" stroke-linecap="round"><path d="M3 14.6 L14.2 2.6 M7.6 14.6 L14.4 7.4 M11.8 14.6 L14.4 11.8"/></svg>
</div>
<div id="menu2">
<div style="top:13px">Read Only</div>
<div style="top:46px">Read/Comment</div>
<div style="top:78.8px">Read/Write</div>
<div style="top:111.6px">Co-Owner</div>
</div>
</body></html>
